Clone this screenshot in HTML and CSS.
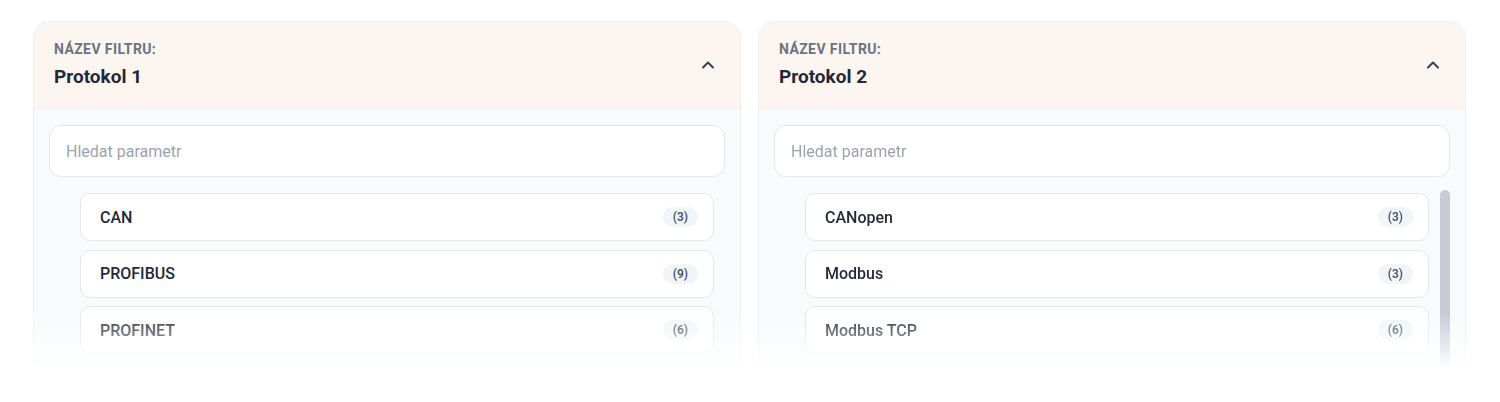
FILE: index.html
```html
<!DOCTYPE html>
<html>
<head>
    <title>Filtry</title>
    <link rel="stylesheet" href="styles.css">
</head>
<body>
    <div class="page">
        <div class="filters">
            <div class="filter-card">
                <div class="filter-header">
                    <div class="filter-titles">
                        <div class="filter-label">Název filtru:</div>
                        <div class="filter-name">Protokol 1</div>
                    </div>
                    <svg class="chevron" viewBox="0 0 24 24" width="20" height="20"><polyline points="6 15 12 9 18 15"/></svg>
                </div>
                <div class="filter-body">
                    <div class="search">Hledat parametr</div>
                    <div class="list-wrap">
                        <div class="param-list no-scroll">
                            <div class="param"><span>CAN</span><span class="count">(3)</span></div>
                            <div class="param"><span>PROFIBUS</span><span class="count">(9)</span></div>
                            <div class="param"><span>PROFINET</span><span class="count">(6)</span></div>
                        </div>
                    </div>
                </div>
            </div>

            <div class="filter-card">
                <div class="filter-header">
                    <div class="filter-titles">
                        <div class="filter-label">Název filtru:</div>
                        <div class="filter-name">Protokol 2</div>
                    </div>
                    <svg class="chevron" viewBox="0 0 24 24" width="20" height="20"><polyline points="6 15 12 9 18 15"/></svg>
                </div>
                <div class="filter-body">
                    <div class="search">Hledat parametr</div>
                    <div class="list-wrap">
                        <div class="param-list">
                            <div class="param"><span>CANopen</span><span class="count">(3)</span></div>
                            <div class="param"><span>Modbus</span><span class="count">(3)</span></div>
                            <div class="param"><span>Modbus TCP</span><span class="count">(6)</span></div>
                        </div>
                        <div class="scroll-thumb"></div>
                    </div>
                </div>
            </div>
        </div>
    </div>
</body>
</html>
```

FILE: styles.css
```css
html, body {
    margin: 0;
    background: #ffffff;
}

body {
    font-family: Roboto, "Liberation Sans", Arial, sans-serif;
    color: #1f2937;
}

.page {
    height: 372px;
    overflow: hidden;
    padding: 21px 34px 0 33px;
    box-sizing: border-box;
    -webkit-mask-image: linear-gradient(to bottom, #000 312px, rgba(0,0,0,0) 370px);
    mask-image: linear-gradient(to bottom, #000 312px, rgba(0,0,0,0) 370px);
}

.filters {
    display: grid;
    grid-template-columns: 708px 708px;
    gap: 17px;
}

.filter-card {
    border: 1px solid #eceef2;
    border-radius: 16px;
    overflow: hidden;
    background: #f8fafc;
    height: 420px;
}

.filter-header {
    display: flex;
    align-items: center;
    justify-content: space-between;
    background: #fdf6f0;
    padding: 18.5px 22px 19.5px 20px;
    border-bottom: 1px solid #f1f1f3;
}

.filter-label {
    font-size: 14px;
    line-height: 16px;
    font-weight: 700;
    text-transform: uppercase;
    letter-spacing: 0.4px;
    color: #6b7280;
}

.filter-name {
    margin-top: 8px;
    font-size: 19px;
    line-height: 24px;
    font-weight: 700;
    color: #1f2937;
}

.chevron {
    fill: none;
    stroke: #374151;
    stroke-width: 2.4;
    stroke-linecap: round;
    stroke-linejoin: round;
}

.filter-body {
    padding: 16px 15px;
}

.search {
    height: 50px;
    border: 1px solid #e3e6ea;
    border-radius: 12px;
    background: #ffffff;
    display: flex;
    align-items: center;
    padding-left: 16px;
    font-size: 16px;
    color: #9ca3af;
}

.list-wrap {
    display: flex;
    margin-top: 16px;
    padding-left: 31px;
}

.param-list {
    flex: 1;
    display: flex;
    flex-direction: column;
    gap: 8.5px;
}

.param-list.no-scroll {
    margin-right: 11px;
}

.param {
    height: 46px;
    border: 1px solid #e3e6ea;
    border-radius: 10px;
    background: #ffffff;
    display: flex;
    align-items: center;
    justify-content: space-between;
    padding: 0 15px 0 19px;
    font-size: 16px;
    font-weight: 500;
    color: #1f2937;
}

.count {
    font-size: 12px;
    font-weight: 600;
    color: #4b5563;
    background: #f1f5f9;
    border-radius: 10px;
    padding: 3px 10px;
    line-height: 14px;
}

.scroll-thumb {
    width: 10px;
    height: 200px;
    margin-left: 11px;
    margin-top: -3px;
    border-radius: 5px;
    background: #c5ccd6;
}
```
